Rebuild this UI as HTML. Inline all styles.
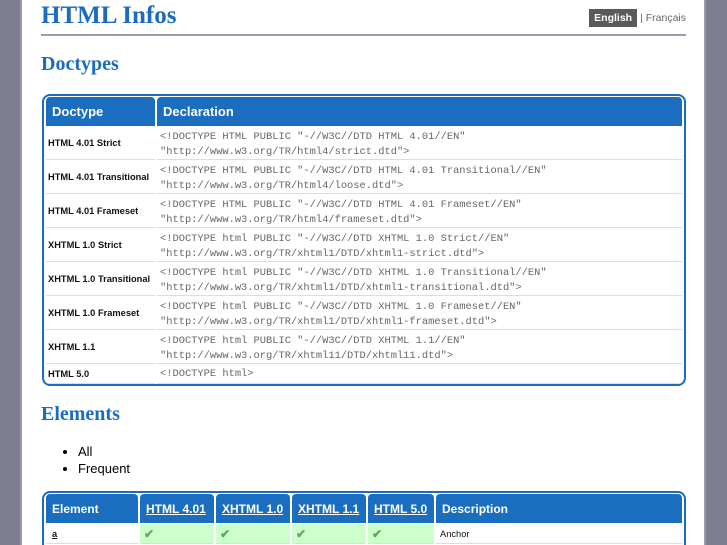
<!DOCTYPE html>
<html style="overflow:hidden"><head><meta charset="utf-8"><style>
*{margin:0;padding:0;box-sizing:border-box}
html,body{width:727px;height:545px;overflow:hidden}
body{background:#7f7e91;font-family:"Liberation Sans",sans-serif;position:relative}
#page{position:absolute;left:20px;top:0;width:686px;height:545px;background:#fff;border-left:2px solid #9a9aab;border-right:2px solid #9a9aab;overflow:hidden}
.abs{position:absolute}
h1,h2{font-family:"Liberation Serif",serif;color:#1b6cc0;font-weight:bold;position:absolute;left:19px}
h1{font-size:25px;top:2px}
h2{font-size:20px}
.rule{left:19px;top:34px;width:645px;height:2px;background:#9c9cae}
.lang{right:18px;top:12px;font-size:10.5px;color:#666}
.lang b{background:#5a5a5a;color:#fff;padding:3px 5px;margin-right:3px}
.tbl{position:absolute;left:20px;width:644px;border:2px solid #1b6cc0;border-radius:8px;overflow:hidden;background:#fff}
table{border-collapse:separate;border-spacing:2px 1px;width:100%}
th{background:#1b6dc0;color:#fff;font-size:13px;text-align:left;padding:0 6px;height:29px;border-radius:4px 4px 0 0;white-space:nowrap}
td{border-bottom:1px solid #ddd;font-size:9.3px;font-weight:bold;padding:0 2px;color:#111;white-space:nowrap}
td.m{font-family:"Liberation Mono",monospace;font-weight:normal;color:#666;font-size:10.4px;line-height:14.5px;padding-left:3px;padding-top:3px}
.t2 table{table-layout:fixed}
.t2 th{padding:0 6px;font-size:12px}
.t2 th a{color:#fff;text-decoration:underline}
.ok{background:#ccffcc;color:#5a5;font-size:12px;padding-left:4px}
ul{position:absolute;left:56px;top:443px;font-size:13px;line-height:17px}
</style></head><body><div id="page">
<h1>HTML Infos</h1>
<div class="abs lang"><b>English</b>| Français</div>
<div class="abs rule"></div>
<h2 style="top:53px">Doctypes</h2>
<div class="tbl" style="top:94px;height:292px">
<table>
<tr><th style="width:109px">Doctype</th><th>Declaration</th></tr>
<tr style="height:33px"><td>HTML 4.01 Strict</td><td class="m">&lt;!DOCTYPE HTML PUBLIC "-//W3C//DTD HTML 4.01//EN"<br>"http://www.w3.org/TR/html4/strict.dtd"&gt;</td></tr>
<tr style="height:33px"><td>HTML 4.01 Transitional</td><td class="m">&lt;!DOCTYPE HTML PUBLIC "-//W3C//DTD HTML 4.01 Transitional//EN"<br>"http://www.w3.org/TR/html4/loose.dtd"&gt;</td></tr>
<tr style="height:33px"><td>HTML 4.01 Frameset</td><td class="m">&lt;!DOCTYPE HTML PUBLIC "-//W3C//DTD HTML 4.01 Frameset//EN"<br>"http://www.w3.org/TR/html4/frameset.dtd"&gt;</td></tr>
<tr style="height:33px"><td>XHTML 1.0 Strict</td><td class="m">&lt;!DOCTYPE html PUBLIC "-//W3C//DTD XHTML 1.0 Strict//EN"<br>"http://www.w3.org/TR/xhtml1/DTD/xhtml1-strict.dtd"&gt;</td></tr>
<tr style="height:33px"><td>XHTML 1.0 Transitional</td><td class="m">&lt;!DOCTYPE html PUBLIC "-//W3C//DTD XHTML 1.0 Transitional//EN"<br>"http://www.w3.org/TR/xhtml1/DTD/xhtml1-transitional.dtd"&gt;</td></tr>
<tr style="height:33px"><td>XHTML 1.0 Frameset</td><td class="m">&lt;!DOCTYPE html PUBLIC "-//W3C//DTD XHTML 1.0 Frameset//EN"<br>"http://www.w3.org/TR/xhtml1/DTD/xhtml1-frameset.dtd"&gt;</td></tr>
<tr style="height:33px"><td>XHTML 1.1</td><td class="m">&lt;!DOCTYPE html PUBLIC "-//W3C//DTD XHTML 1.1//EN"<br>"http://www.w3.org/TR/xhtml11/DTD/xhtml11.dtd"&gt;</td></tr>
<tr style="height:19px"><td>HTML 5.0</td><td class="m" style="padding-top:0">&lt;!DOCTYPE html&gt;</td></tr>
</table></div>
<h2 style="top:403px">Elements</h2>
<ul><li>All</li><li>Frequent</li></ul>
<div class="tbl t2" style="top:491px;height:70px">
<table>
<tr><th style="width:92px">Element</th><th style="width:74px"><a>HTML 4.01</a></th><th style="width:74px"><a>XHTML 1.0</a></th><th style="width:74px"><a>XHTML 1.1</a></th><th style="width:66px"><a>HTML 5.0</a></th><th>Description</th></tr>
<tr style="height:20px"><td style="padding-left:6px"><u>a</u></td><td class="ok">✔</td><td class="ok">✔</td><td class="ok">✔</td><td class="ok">✔</td><td style="font-weight:normal;padding-left:4px">Anchor</td></tr>
</table></div>
</div></body></html>
